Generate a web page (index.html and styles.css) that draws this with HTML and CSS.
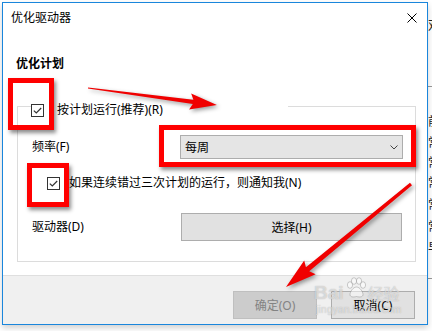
FILE: index.html
```html
<!DOCTYPE html>
<html lang="zh-CN">
<head>
    <meta charset="UTF-8">
    <title>优化驱动器</title>
    <link rel="stylesheet" href="styles.css">
</head>
<body>
    <!-- what shows of the window behind, on the right edge -->
    <div class="backdrop">
        <div class="back-line line-a"></div>
        <div class="back-text" style="top: 18px">双</div>
        <div class="back-text" style="top: 114px">前</div>
        <div class="back-text" style="top: 135px">常</div>
        <div class="back-text" style="top: 155px">常</div>
        <div class="back-text" style="top: 175px">常</div>
        <div class="back-text" style="top: 197px">常</div>
        <div class="back-text" style="top: 219px">常</div>
        <div class="back-text" style="top: 240px">早</div>
        <div class="back-line line-b"></div>
    </div>

    <div class="window">
        <div class="titlebar">
            <span class="title">优化驱动器</span>
            <span class="close">
                <svg width="10" height="10" viewBox="0 0 10 10">
                    <path d="M0.5 0.5 L9.5 9.5 M9.5 0.5 L0.5 9.5" stroke="#000" stroke-width="1" fill="none"/>
                </svg>
            </span>
        </div>

        <div class="content">
            <div class="section-title">优化计划</div>

            <div class="group">
                <div class="group-head">
                    <svg class="check" width="13" height="13" viewBox="0 0 13 13">
                        <rect x="0.5" y="0.5" width="12" height="12" fill="#fff" stroke="#333"/>
                        <path d="M2.8 6.6 L5.3 9 L10.2 4" fill="none" stroke="#333" stroke-width="1.2"/>
                    </svg>
                    <span class="head-label">按计划运行(推荐)(R)</span>
                </div>

                <div class="row freq-row">
                    <span class="row-label">频率(F)</span>
                    <div class="combo">
                        <span>每周</span>
                        <svg width="8" height="5" viewBox="0 0 8 5">
                            <path d="M0.5 0.5 L4 4 L7.5 0.5" fill="none" stroke="#444" stroke-width="1"/>
                        </svg>
                    </div>
                </div>

                <div class="row notify-row">
                    <svg class="check" width="13" height="13" viewBox="0 0 13 13">
                        <rect x="0.5" y="0.5" width="12" height="12" fill="#fff" stroke="#333"/>
                        <path d="M2.8 6.6 L5.3 9 L10.2 4" fill="none" stroke="#333" stroke-width="1.2"/>
                    </svg>
                    <span class="notify-label">如果连续错过三次计划的运行，则通知我(N)</span>
                </div>

                <div class="row drive-row">
                    <span class="row-label">驱动器(D)</span>
                    <button class="btn pick-btn">选择(H)</button>
                </div>
            </div>
        </div>

        <div class="footer">
            <button class="btn btn-disabled">确定(O)</button>
            <button class="btn">取消(C)</button>
        </div>
    </div>

    <!-- watermark -->
    <div class="watermark">
        <div class="wm-top">
            <span class="wm-bai">Bai</span>
            <svg class="wm-paw" width="22" height="22" viewBox="0 0 22 22">
                <ellipse cx="5" cy="8" rx="2.6" ry="3.3"/>
                <ellipse cx="9" cy="4" rx="2.6" ry="3.3"/>
                <ellipse cx="14" cy="4" rx="2.6" ry="3.3"/>
                <ellipse cx="18" cy="8" rx="2.6" ry="3.3"/>
                <path d="M11.5 10 C8 10 5 15 5 17.5 C5 20 8 20.5 11.5 19.5 C15 20.5 18 20 18 17.5 C18 15 15 10 11.5 10 Z"/>
            </svg>
            <span class="wm-jy">经验</span>
        </div>
        <div class="wm-url">jingyan.baidu.com</div>
    </div>

    <!-- red annotations -->
    <div class="mark mark-1"></div>
    <div class="mark mark-2"></div>
    <div class="mark mark-3"></div>

    <svg class="arrows" width="432" height="331" viewBox="0 0 432 331">
        <g transform="translate(88 88) rotate(7.5)">
            <polygon points="0,-0.6 106,-2.2 103,-8 130,0 103,8 106,2.2 0,0.6"/>
        </g>
        <g transform="translate(411 184) rotate(140.5)">
            <polygon points="0,-1.6 134,-2.6 131,-9 162,0 131,9 134,2.6 0,1.6"/>
        </g>
    </svg>
</body>
</html>
```

FILE: styles.css
```css
body {
    margin: 0;
    width: 432px;
    height: 331px;
    overflow: hidden;
    position: relative;
    background-color: #fff;
    font-family: "Noto Sans", "Noto Sans CJK SC", sans-serif;
    font-size: 12px;
    color: #000;
}

.backdrop {
    position: absolute;
    top: 0;
    left: 428px;
    width: 10px;
    height: 331px;
    background-color: #fff;
}

.back-text {
    position: absolute;
    left: 0;
    font-family: "Noto Sans CJK SC", sans-serif;
    font-size: 12px;
    line-height: 14px;
    color: #222;
}

.back-line {
    position: absolute;
    left: 0;
    width: 10px;
    height: 1px;
    background-color: #999;
}

.line-a {
    top: 86px;
}

.line-b {
    top: 278px;
}

.window {
    position: relative;
    z-index: 1;
    width: 424px;
    height: 321px;
    margin: 2px 0 0 2px;
    border: 1px solid #1a86dc;
    background-color: #fff;
    display: flex;
    flex-direction: column;
    box-shadow: 0 3px 6px rgba(0, 0, 0, 0.18);
}

.titlebar {
    height: 30px;
    display: flex;
    align-items: center;
    justify-content: space-between;
    padding-left: 8px;
}

.title {
    line-height: 16px;
}

.close {
    width: 30px;
    height: 30px;
    display: flex;
    align-items: center;
    justify-content: center;
}

.content {
    flex: 1;
}

.section-title {
    margin: 23px 0 0 13px;
    font-weight: bold;
    line-height: 16px;
}

.group {
    margin: 34px 0 0 14px;
    width: 397px;
    border: 1px solid #dcdcdc;
    padding-bottom: 20px;
}

.group-head {
    margin: -4px 0 0 13px;
    width: 257px;
    height: 14px;
    display: flex;
    align-items: center;
    background-color: #fff;
}

.check {
    display: block;
    flex-shrink: 0;
}

.head-label {
    margin-left: 13px;
    line-height: 14px;
}

.row {
    display: flex;
    align-items: center;
}

.row-label {
    flex-shrink: 0;
    line-height: 16px;
}

.freq-row {
    margin: 18px 0 0 14px;
}

.freq-row .row-label {
    width: 148px;
}

.combo {
    width: 221px;
    height: 22px;
    border: 1px solid #adadad;
    background-color: #e5e5e5;
    display: flex;
    align-items: center;
    justify-content: space-between;
    padding: 0 4px 0 4px;
    box-sizing: content-box;
    margin-right: 0;
}

.combo {
    width: 213px;
}

.notify-row {
    margin: 17px 0 0 29px;
    height: 14px;
}

.notify-label {
    margin-left: 9px;
    line-height: 14px;
}

.drive-row {
    margin: 23px 0 0 14px;
}

.drive-row .row-label {
    width: 149px;
}

.btn {
    font-family: inherit;
    font-size: 12px;
    color: #000;
    background-color: #e1e1e1;
    border: 1px solid #adadad;
    width: 84px;
    height: 28px;
    padding: 0;
    box-sizing: border-box;
}

.pick-btn {
    width: 221px;
}

.btn-disabled {
    background-color: #cccccc;
    border-color: #bfbfbf;
    color: #838383;
}

.footer {
    height: 48px;
    border-top: 1px solid #dfdfdf;
    background-color: #f0f0f0;
    display: flex;
    justify-content: flex-end;
    align-items: flex-start;
    gap: 14px;
    padding: 15px 12px 0 0;
    box-sizing: content-box;
}

.footer {
    height: 33px;
}

.watermark {
    position: absolute;
    z-index: 2;
    left: 314px;
    top: 271px;
    color: rgba(255, 255, 255, 0.55);
    text-shadow: 0 0 1px rgba(120, 120, 120, 0.6);
}

.wm-top {
    display: flex;
    align-items: flex-end;
}

.wm-bai {
    font-family: "Liberation Sans", sans-serif;
    font-size: 19px;
    font-weight: bold;
    line-height: 20px;
    margin-top: 12px;
}

.wm-paw {
    fill: rgba(255, 255, 255, 0.5);
    stroke: rgba(130, 130, 130, 0.5);
    stroke-width: 0.8;
    margin: 0 0 4px 1px;
}

.wm-jy {
    font-family: "Noto Sans CJK SC", sans-serif;
    font-size: 16px;
    line-height: 20px;
    margin-left: 1px;
}

.wm-url {
    font-family: "Liberation Sans", sans-serif;
    font-size: 10px;
    line-height: 12px;
    margin: 1px 0 0 2px;
    letter-spacing: 0.3px;
}

.mark {
    position: absolute;
    z-index: 3;
    border: 5px solid #ff0000;
    box-sizing: border-box;
    box-shadow: 2px 3px 4px rgba(0, 0, 0, 0.45);
}

.mark-1 {
    left: 8px;
    top: 78px;
    width: 46px;
    height: 52px;
}

.mark-2 {
    left: 159px;
    top: 125px;
    width: 257px;
    height: 42px;
}

.mark-3 {
    left: 27px;
    top: 163px;
    width: 42px;
    height: 44px;
}

.arrows {
    position: absolute;
    z-index: 4;
    left: 0;
    top: 0;
    fill: #f00000;
    filter: drop-shadow(2px 2px 2px rgba(0, 0, 0, 0.4));
}
```
